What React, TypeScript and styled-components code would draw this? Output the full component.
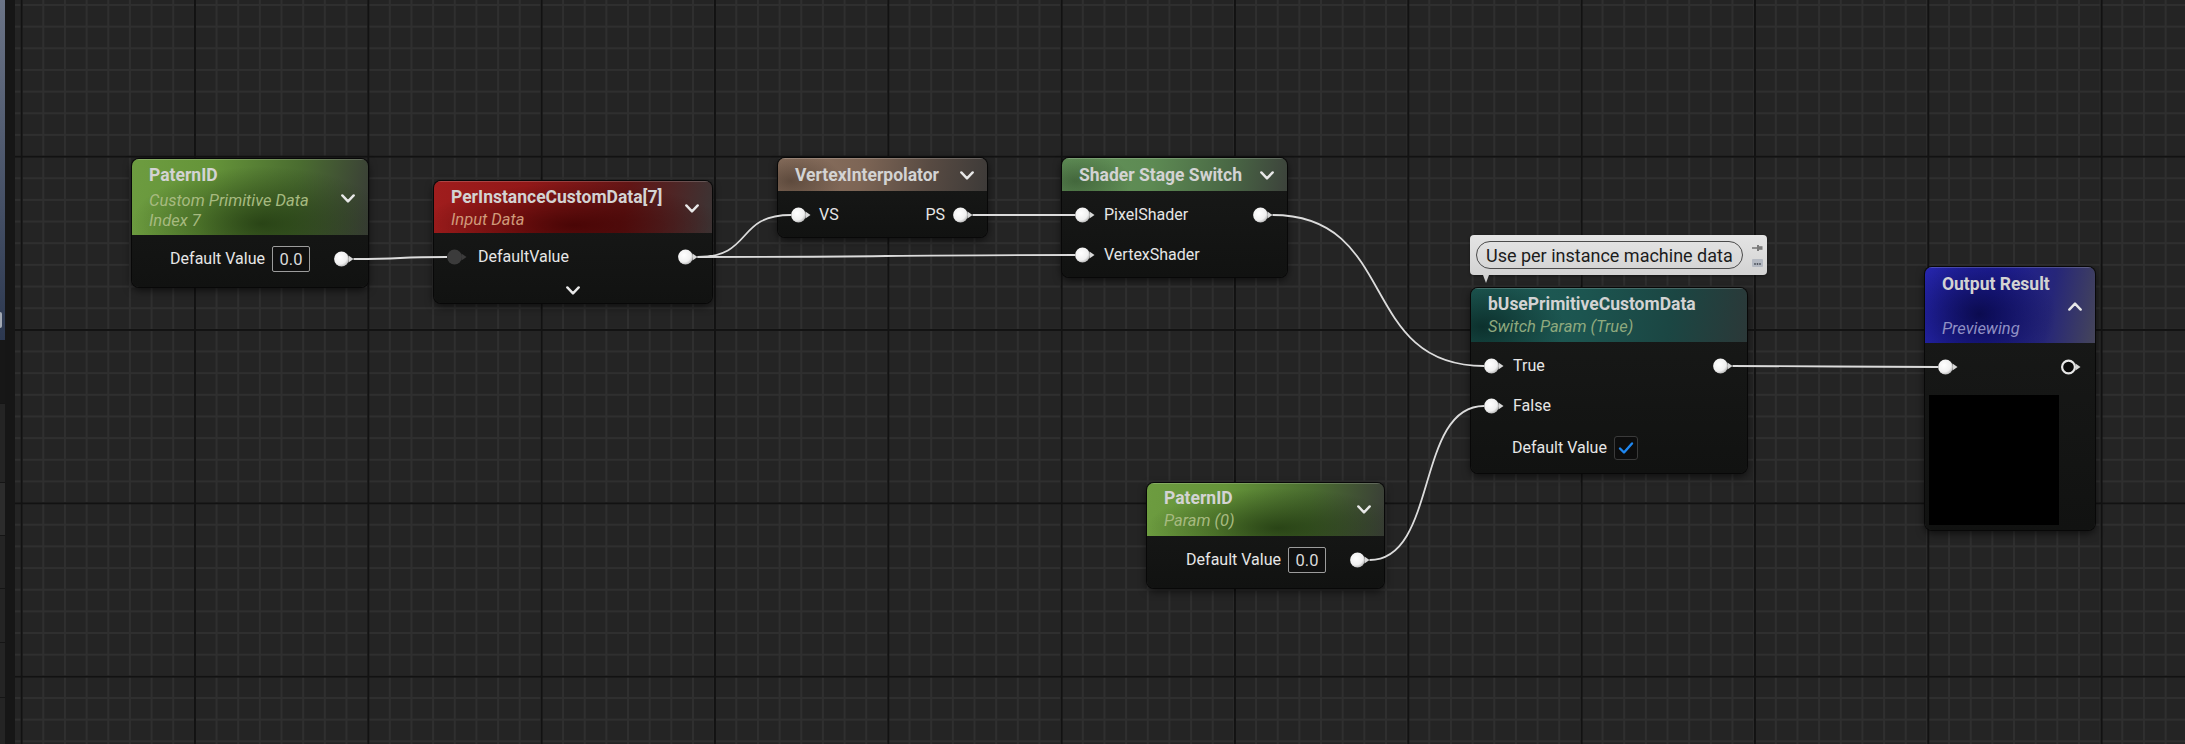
import styled, { createGlobalStyle } from 'styled-components';

const GlobalStyle = createGlobalStyle`
  html, body {
    margin: 0;
    padding: 0;
    background: #242424;
  }
  body {
    font-family: Roboto, "Noto Sans", "Liberation Sans", sans-serif;
    overflow: hidden;
  }
`;

type Tone = 'green' | 'red' | 'brown' | 'sage' | 'teal' | 'blue';

const TONES: Record<Tone, { header: string; sub: string }> = {
  green: {
    header:
      'radial-gradient(ellipse 55% 75% at 55% 85%, rgba(24,46,10,0.7), rgba(24,46,10,0) 100%), linear-gradient(100deg, #6d9c40 0%, #659439 32%, #4a6c30 68%, #393c37 100%)',
    sub: '#a7ba80',
  },
  red: {
    header:
      'radial-gradient(ellipse 55% 80% at 50% 85%, rgba(58,0,0,0.75), rgba(58,0,0,0) 100%), linear-gradient(100deg, #a01d1d 0%, #921818 32%, #621515 68%, #3b3535 100%)',
    sub: '#d09a7a',
  },
  brown: {
    header:
      'radial-gradient(ellipse 25% 90% at 6% 70%, rgba(40,28,20,0.45), rgba(40,28,20,0) 100%), linear-gradient(100deg, #8d7361 0%, #7d6555 40%, #574a42 72%, #3d3a38 100%)',
    sub: '#cbb8a8',
  },
  sage: {
    header:
      'radial-gradient(ellipse 25% 90% at 6% 70%, rgba(20,40,18,0.4), rgba(20,40,18,0) 100%), linear-gradient(100deg, #64935a 0%, #5d8a53 40%, #4a6945 72%, #3c423b 100%)',
    sub: '#b8d0a8',
  },
  teal: {
    header:
      'radial-gradient(ellipse 30% 95% at 4% 72%, rgba(0,20,18,0.6), rgba(0,20,18,0) 100%), linear-gradient(100deg, #1f5d57 0%, #1c5550 40%, #1b4643 72%, #2b3838 100%)',
    sub: '#8fa97e',
  },
  blue: {
    header:
      'radial-gradient(ellipse 45% 80% at 32% 62%, rgba(6,6,60,0.8), rgba(6,6,60,0) 100%), linear-gradient(100deg, #2626ae 0%, #1e1e9a 40%, #262679 72%, #45455a 100%)',
    sub: '#9090c4',
  },
};

/* ---------- page + side panel ---------- */

const Page = styled.div`
  display: flex;
  width: 2185px;
  height: 744px;
  overflow: hidden;
`;

const Side = styled.div`
  display: flex;
  flex: none;
  width: 15px;
  height: 100%;
`;

const Strip = styled.div`
  display: flex;
  flex-direction: column;
  width: 5px;
`;

const StripTop = styled.div`
  position: relative;
  height: 340px;
  flex: none;
  background: linear-gradient(#6b7487, #2c3850);
`;

const StripHandle = styled.div`
  position: absolute;
  left: 0;
  top: 312px;
  width: 2px;
  height: 16px;
  border-radius: 0 2px 2px 0;
  background: #a3a9b4;
`;

const StripGap = styled.div`
  height: 63px;
  flex: none;
  background: #171717;
`;

const StripRow = styled.div<{ $h: number; $light?: boolean }>`
  height: ${p => p.$h}px;
  flex: none;
  box-sizing: border-box;
  border-top: 1px solid #151515;
  background: ${p => (p.$light ? '#2c2c2c' : '#242424')};
`;

const Gutter = styled.div`
  width: 10px;
  background: #161616;
`;

const Canvas = styled.div`
  position: relative;
  flex: 1;
  height: 100%;
  background-color: #242424;
  background-image:
    linear-gradient(to right, #121212 2px, transparent 2px),
    linear-gradient(to bottom, #121212 2px, transparent 2px),
    linear-gradient(to right, #2f2f2f 2px, transparent 2px),
    linear-gradient(to bottom, #2f2f2f 2px, transparent 2px);
  background-size:
    173.333px 100%,
    100% 173.333px,
    21.6667px 100%,
    100% 21.6667px;
  background-position:
    5.67px 0,
    0 155.67px,
    5.67px 0,
    0 4px;
`;

/* ---------- wires ---------- */

const WireLayer = styled.svg`
  position: absolute;
  left: -15px;
  top: 0;
  width: 2185px;
  height: 744px;
  pointer-events: none;
  z-index: 2;
`;

const wire = (x0: number, y0: number, x1: number, y1: number) => {
  const d = Math.max((x1 - x0) * 0.6, 20);
  return `M ${x0} ${y0} C ${x0 + d} ${y0}, ${x1 - d} ${y1}, ${x1} ${y1}`;
};

const WIRES: [number, number, number, number][] = [
  [353.5, 259, 447, 257],
  [697.5, 257, 791, 215],
  [697.5, 257, 1075, 255],
  [972.5, 215, 1075, 215],
  [1272.5, 215, 1484, 366],
  [1369.5, 560, 1484, 406],
  [1732.5, 366, 1938, 367],
];

/* ---------- nodes ---------- */

const NodeBox = styled.div<{ $x: number; $y: number; $w: number }>`
  position: absolute;
  left: ${p => p.$x - 15}px;
  top: ${p => p.$y}px;
  width: ${p => p.$w}px;
  box-sizing: border-box;
  border-radius: 7px;
  overflow: hidden;
  background: linear-gradient(#191a19, #111211);
  box-shadow:
    0 0 0 1px #080808,
    0 3px 8px rgba(0, 0, 0, 0.65);
  z-index: 1;
`;

const Header = styled.div<{ $tone: Tone; $pt: number; $pb: number }>`
  display: flex;
  align-items: center;
  justify-content: space-between;
  padding: ${p => p.$pt}px 13px ${p => p.$pb}px 17px;
  background: ${p => TONES[p.$tone].header};
  box-shadow: inset 0 1px 0 rgba(255, 255, 255, 0.18);
`;

const HeaderText = styled.div`
  display: flex;
  flex-direction: column;
  min-width: 0;
`;

const Title = styled.div`
  font-size: 17.5px;
  line-height: 20px;
  font-weight: 700;
  color: #d3d3d3;
  white-space: nowrap;
`;

const Subtitle = styled.div<{ $tone: Tone; $gap: number }>`
  margin-top: ${p => p.$gap}px;
  font-size: 16.5px;
  line-height: 20px;
  font-style: italic;
  color: ${p => TONES[p.$tone].sub};
  white-space: nowrap;
`;

const Body = styled.div<{ $pb: number }>`
  padding: 4px 0 ${p => p.$pb}px;
`;

const Row = styled.div<{ $h?: number; $pl?: number }>`
  display: flex;
  align-items: center;
  justify-content: space-between;
  height: ${p => p.$h ?? 40}px;
  padding: 0 14px 0 ${p => p.$pl ?? 13}px;
`;

const PinGroup = styled.div<{ $gap?: number }>`
  display: flex;
  align-items: center;
  gap: ${p => p.$gap ?? 9}px;
`;

const Label = styled.span`
  font-size: 16px;
  line-height: 20px;
  color: #e6e6e6;
  white-space: nowrap;
`;

const ValueBox = styled.div`
  width: 38px;
  height: 26px;
  box-sizing: border-box;
  margin-right: 17px;
  border: 1px solid #9c9c9c;
  border-radius: 2px;
  background: #101010;
  display: flex;
  align-items: center;
  justify-content: center;
  font-size: 16.5px;
  color: #dadada;
`;

const CheckBox = styled.div`
  width: 24px;
  height: 24px;
  box-sizing: border-box;
  border: 1px solid #3a3a3a;
  border-radius: 3px;
  background: #0d0d0d;
  display: grid;
  place-items: center;
`;

const AdvancedRow = styled.div`
  display: flex;
  justify-content: center;
  align-items: center;
  height: 26px;
`;

const Preview = styled.div`
  width: 130px;
  height: 130px;
  margin: 8px 0 5px 4px;
  background: #000;
`;

/* ---------- comment bubble ---------- */

const Comment = styled.div`
  position: absolute;
  left: ${1470 - 15}px;
  top: 235px;
  width: 297px;
  height: 40px;
  box-sizing: border-box;
  display: flex;
  align-items: center;
  gap: 9px;
  padding: 0 0 0 6px;
  border-radius: 4px;
  background: linear-gradient(#e4e4e4, #d3d3d3);
  box-shadow: 0 1px 3px rgba(0, 0, 0, 0.4);
  z-index: 3;

  &::after {
    content: '';
    position: absolute;
    left: 13px;
    top: 40px;
    border-left: 3px solid transparent;
    border-right: 3px solid transparent;
    border-top: 8px solid #d0d0d0;
  }
`;

const CommentPill = styled.div`
  width: 267px;
  height: 28px;
  box-sizing: border-box;
  display: flex;
  align-items: center;
  padding-left: 9px;
  border: 1.5px solid #4a4a4a;
  border-radius: 14px;
  font-size: 18px;
  color: #1c1c1c;
  white-space: nowrap;
`;

const CommentTools = styled.div`
  display: flex;
  flex-direction: column;
  gap: 7px;
`;

/* ---------- drawings ---------- */

type PinKind = 'solid' | 'dim' | 'ring';

function Pin({ kind = 'solid' }: { kind?: PinKind }) {
  const arrow = kind === 'dim' ? '#3b3b3b' : '#d8d8d8';
  return (
    <svg width="20" height="16" viewBox="0 0 20 16">
      <defs>
        <radialGradient id="pinShade" cx="40%" cy="38%" r="65%">
          <stop offset="0%" stopColor="#ffffff" />
          <stop offset="70%" stopColor="#f0f0f0" />
          <stop offset="100%" stopColor="#b8b8b8" />
        </radialGradient>
      </defs>
      <polygon points="14.5,4.5 19.5,8 14.5,11.5" fill={arrow} />
      {kind === 'ring' ? (
        <circle cx="7.5" cy="8" r="6.4" fill="#0a0a0a" stroke="#e6e6e6" strokeWidth="2.2" />
      ) : (
        <circle cx="7.5" cy="8" r="7.4" fill={kind === 'dim' ? '#3b3b3b' : 'url(#pinShade)'} />
      )}
    </svg>
  );
}

function Chevron({ up = false }: { up?: boolean }) {
  return (
    <svg width="14" height="9" viewBox="0 0 14 9">
      <polyline
        points={up ? '1.3,7.6 7,1.6 12.7,7.6' : '1.3,1.4 7,7.4 12.7,1.4'}
        fill="none"
        stroke="#e8e8e8"
        strokeWidth="2.4"
        strokeLinecap="round"
        strokeLinejoin="round"
      />
    </svg>
  );
}

function Check() {
  return (
    <svg width="16" height="14" viewBox="0 0 16 14">
      <polyline
        points="2,7.5 6,11.5 14,2.5"
        fill="none"
        stroke="#1f87f0"
        strokeWidth="2.4"
        strokeLinecap="round"
        strokeLinejoin="round"
      />
    </svg>
  );
}

function PinIcon() {
  return (
    <svg width="11" height="8" viewBox="0 0 11 8">
      <rect x="0" y="3.2" width="5" height="1.6" fill="#7a7a7a" />
      <rect x="5" y="1" width="2" height="6" fill="#7a7a7a" />
      <rect x="7" y="2.2" width="3.5" height="3.6" fill="#7a7a7a" />
    </svg>
  );
}

function MoreIcon() {
  return (
    <svg width="11" height="8" viewBox="0 0 11 8">
      <rect x="0" y="0" width="11" height="8" rx="1" fill="#b4b9c2" />
      <circle cx="3" cy="5" r="0.9" fill="#4a4f58" />
      <circle cx="5.5" cy="5" r="0.9" fill="#4a4f58" />
      <circle cx="8" cy="5" r="0.9" fill="#4a4f58" />
    </svg>
  );
}

/* ---------- page ---------- */

export default function App() {
  return (
    <>
      <GlobalStyle />
      <Page>
        <Side>
          <Strip>
            <StripTop>
              <StripHandle />
            </StripTop>
            <StripGap />
            <StripRow $h={79} />
            <StripRow $h={53} $light />
            <StripRow $h={53} />
            <StripRow $h={54} />
            <StripRow $h={55} />
            <StripRow $h={60} />
          </Strip>
          <Gutter />
        </Side>

        <Canvas>
          <WireLayer viewBox="0 0 2185 744">
            {WIRES.map(([x0, y0, x1, y1], i) => (
              <path key={i} d={wire(x0, y0, x1, y1)} fill="none" stroke="#dcdcdc" strokeWidth="1.8" />
            ))}
          </WireLayer>

          {/* PaternID (Custom Primitive Data) */}
          <NodeBox $x={132} $y={159} $w={236}>
            <Header $tone="green" $pt={6} $pb={4}>
              <HeaderText>
                <Title>PaternID</Title>
                <Subtitle $tone="green" $gap={6}>
                  Custom Primitive Data
                  <br />
                  Index 7
                </Subtitle>
              </HeaderText>
              <Chevron />
            </Header>
            <Body $pb={8}>
              <Row>
                <span />
                <PinGroup $gap={7}>
                  <Label>Default Value</Label>
                  <ValueBox>0.0</ValueBox>
                  <Pin />
                </PinGroup>
              </Row>
            </Body>
          </NodeBox>

          {/* PerInstanceCustomData[7] */}
          <NodeBox $x={434} $y={181} $w={278}>
            <Header $tone="red" $pt={6} $pb={3}>
              <HeaderText>
                <Title>PerInstanceCustomData[7]</Title>
                <Subtitle $tone="red" $gap={3}>
                  Input Data
                </Subtitle>
              </HeaderText>
              <Chevron />
            </Header>
            <Body $pb={0}>
              <Row>
                <PinGroup $gap={11}>
                  <Pin kind="dim" />
                  <Label>DefaultValue</Label>
                </PinGroup>
                <Pin />
              </Row>
              <AdvancedRow>
                <Chevron />
              </AdvancedRow>
            </Body>
          </NodeBox>

          {/* VertexInterpolator */}
          <NodeBox $x={778} $y={158} $w={209}>
            <Header $tone="brown" $pt={7} $pb={6}>
              <Title>VertexInterpolator</Title>
              <Chevron />
            </Header>
            <Body $pb={2}>
              <Row>
                <PinGroup $gap={8}>
                  <Pin />
                  <Label>VS</Label>
                </PinGroup>
                <PinGroup $gap={8}>
                  <Label>PS</Label>
                  <Pin />
                </PinGroup>
              </Row>
            </Body>
          </NodeBox>

          {/* Shader Stage Switch */}
          <NodeBox $x={1062} $y={158} $w={225}>
            <Header $tone="sage" $pt={7} $pb={6}>
              <Title>Shader Stage Switch</Title>
              <Chevron />
            </Header>
            <Body $pb={2}>
              <Row>
                <PinGroup>
                  <Pin />
                  <Label>PixelShader</Label>
                </PinGroup>
                <Pin />
              </Row>
              <Row>
                <PinGroup>
                  <Pin />
                  <Label>VertexShader</Label>
                </PinGroup>
              </Row>
            </Body>
          </NodeBox>

          <Comment>
            <CommentPill>Use per instance machine data</CommentPill>
            <CommentTools>
              <PinIcon />
              <MoreIcon />
            </CommentTools>
          </Comment>

          {/* bUsePrimitiveCustomData */}
          <NodeBox $x={1471} $y={288} $w={276}>
            <Header $tone="teal" $pt={6} $pb={5}>
              <HeaderText>
                <Title>bUsePrimitiveCustomData</Title>
                <Subtitle $tone="teal" $gap={3}>
                  Switch Param (True)
                </Subtitle>
              </HeaderText>
            </Header>
            <Body $pb={3}>
              <Row>
                <PinGroup>
                  <Pin />
                  <Label>True</Label>
                </PinGroup>
                <Pin />
              </Row>
              <Row>
                <PinGroup>
                  <Pin />
                  <Label>False</Label>
                </PinGroup>
              </Row>
              <Row $h={44} $pl={41}>
                <PinGroup $gap={7}>
                  <Label>Default Value</Label>
                  <CheckBox>
                    <Check />
                  </CheckBox>
                </PinGroup>
              </Row>
            </Body>
          </NodeBox>

          {/* PaternID (Param) */}
          <NodeBox $x={1147} $y={483} $w={237}>
            <Header $tone="green" $pt={5} $pb={5}>
              <HeaderText>
                <Title>PaternID</Title>
                <Subtitle $tone="green" $gap={3}>
                  Param (0)
                </Subtitle>
              </HeaderText>
              <Chevron />
            </Header>
            <Body $pb={8}>
              <Row>
                <span />
                <PinGroup $gap={7}>
                  <Label>Default Value</Label>
                  <ValueBox>0.0</ValueBox>
                  <Pin />
                </PinGroup>
              </Row>
            </Body>
          </NodeBox>

          {/* Output Result */}
          <NodeBox $x={1925} $y={267} $w={170}>
            <Header $tone="blue" $pt={7} $pb={4}>
              <HeaderText>
                <Title>Output Result</Title>
                <Subtitle $tone="blue" $gap={25}>
                  Previewing
                </Subtitle>
              </HeaderText>
              <Chevron up />
            </Header>
            <Body $pb={0}>
              <Row>
                <Pin />
                <Pin kind="ring" />
              </Row>
              <Preview />
            </Body>
          </NodeBox>
        </Canvas>
      </Page>
    </>
  );
}
